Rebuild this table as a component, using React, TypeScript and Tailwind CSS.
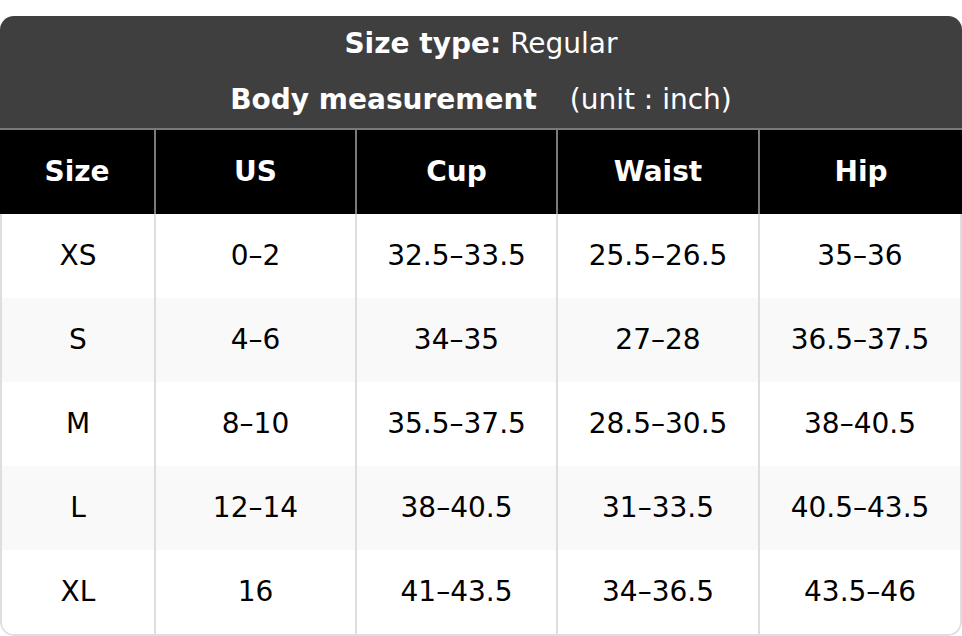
import React from "react";

const rows = [
  ["XS", "0–2", "32.5–33.5", "25.5–26.5", "35–36"],
  ["S", "4–6", "34–35", "27–28", "36.5–37.5"],
  ["M", "8–10", "35.5–37.5", "28.5–30.5", "38–40.5"],
  ["L", "12–14", "38–40.5", "31–33.5", "40.5–43.5"],
  ["XL", "16", "41–43.5", "34–36.5", "43.5–46"],
];

const heads = ["Size", "US", "Cup", "Waist", "Hip"];

export default function App() {
  return (
    <div
      className="w-[962px] h-[636px] bg-white pt-[16px]"
      style={{ fontFamily: '"DejaVu Sans", Verdana, sans-serif' }}
    >
      <div className="rounded-[14px] overflow-hidden bg-white">
        <div className="bg-[#3f3f3f] text-white text-[28px] text-center border-b-2 border-[#7a7a7a]">
          <div className="h-[56px] flex items-center justify-center">
            <span className="font-bold">Size type:</span>
            <span className="ml-[9px]">Regular</span>
          </div>
          <div className="h-[56px] flex items-center justify-center">
            <span className="font-bold">Body measurement</span>
            <span className="ml-[33px]">(unit : inch)</span>
          </div>
        </div>
        <div className="grid grid-cols-[154px_201px_201px_202px_1fr]">
          {heads.map((h, i) => (
            <div
              key={h}
              className={`h-[84px] bg-black text-white font-bold text-[28px] flex items-center justify-center ${
                i > 0 ? "border-l-2 border-[#7a7a7a]" : ""
              }`}
            >
              {h}
            </div>
          ))}
        </div>
        <div className="border-x-2 border-b-2 border-[#dedede] rounded-b-[14px] overflow-hidden">
          {rows.map((r, ri) => (
            <div
              key={ri}
              className={`grid grid-cols-[152px_201px_201px_202px_1fr] ${
                ri % 2 === 1 ? "bg-[#f9f9f9]" : "bg-white"
              }`}
            >
              {r.map((c, ci) => (
                <div
                  key={ci}
                  className={`h-[84px] text-[28px] text-black flex items-center justify-center ${
                    ci > 0 ? "border-l-2 border-[#dedede]" : ""
                  }`}
                >
                  {c}
                </div>
              ))}
            </div>
          ))}
        </div>
      </div>
    </div>
  );
}
